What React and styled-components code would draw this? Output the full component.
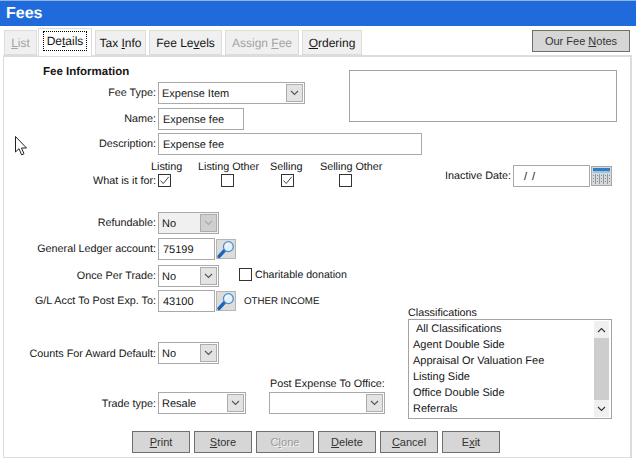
import styled, { createGlobalStyle } from 'styled-components';

const GlobalStyle = createGlobalStyle`
	html, body {
		margin: 0;
		padding: 0;
		background: #fff;
	}
	* {
		box-sizing: border-box;
	}
`;

const Page = styled.div`
	position: relative;
	width: 636px;
	height: 462px;
	overflow: hidden;
	font-family: 'Liberation Sans', Arial, sans-serif;
	font-size: 10.8px;
	color: #151515;
	text-rendering: geometricPrecision;
`;

const TitleBar = styled.div`
	height: 26px;
	padding-left: 6px;
	background: #1f6bdc;
	border-top: 1px solid #8fb4ee;
	color: #fff;
	font-size: 16px;
	font-weight: bold;
	line-height: 25px;
`;

const TabBar = styled.div`
	display: flex;
	align-items: flex-end;
	height: 29px;
	padding: 0 6px 0 4px;
`;

const Tab = styled.div`
	position: relative;
	display: flex;
	align-items: center;
	justify-content: center;
	width: ${(p) => p.$w}px;
	height: ${(p) => (p.$active ? 28 : 25)}px;
	margin-right: ${(p) => p.$gap ?? 3}px;
	margin-bottom: ${(p) => (p.$active ? -1 : 0)}px;
	padding-bottom: ${(p) => (p.$active ? 3 : 0)}px;
	background: ${(p) => (p.$active ? '#fff' : '#f0f0f0')};
	border: 1px solid #dcdcdc;
	border-bottom: ${(p) => (p.$active ? 'none' : '1px solid #dcdcdc')};
	color: ${(p) => (p.$disabled ? '#a3a3a3' : '#151515')};
	font-size: 12px;
	z-index: ${(p) => (p.$active ? 1 : 0)};
`;

const FocusBox = styled.span`
	padding: 2px 3px;
	border: 1px dotted #000;
`;

const NotesButton = styled.button`
	width: 98px;
	height: 22px;
	margin: 0 0 3px auto;
	padding: 0;
	background: #d6d6d6;
	border: 1px solid #6f6f6f;
	color: #333;
	font: inherit;
	font-size: 11px;
`;

const Panel = styled.div`
	width: 629px;
	height: 403px;
	margin-left: 3px;
	border: 1px solid #dcdcdc;
	border-right-width: 2px;
	border-top-width: 2px;
`;

const TopSection = styled.div`
	display: flex;
`;

const TopLeft = styled.div`
	flex: 0 0 345px;
	height: 73px;
`;

const Heading = styled.div`
	height: 14px;
	margin: 7px 0 4px 39px;
	font-size: 11.5px;
	font-weight: bold;
	line-height: 16px;
`;

const NotesBox = styled.div`
	width: 268px;
	height: 52px;
	margin-top: 13px;
	border: 1px solid #a3a3a3;
`;

const Row = styled.div`
	display: flex;
	align-items: center;
	margin-top: ${(p) => p.$top ?? 0}px;
`;

const Label = styled.div`
	flex: 0 0 153px;
	margin-right: 1px;
	padding-right: 1px;
	padding-top: ${(p) => (p.$low ? 2 : 0)}px;
	text-align: right;
	white-space: nowrap;
`;

const TextBox = styled.div`
	width: ${(p) => p.$w}px;
	height: 22px;
	padding-left: 4px;
	background: #fff;
	border: 1px solid #a9a9a9;
	font-size: 11px;
	line-height: 22px;
`;

const SelectBox = styled.div`
	display: flex;
	align-items: center;
	justify-content: space-between;
	width: ${(p) => p.$w}px;
	height: 22px;
	padding: 0 1px 0 3px;
	background: ${(p) => (p.$disabled ? '#f0f0f0' : '#fff')};
	border: 1px solid #a9a9a9;
	font-size: 11px;
`;

const SelectValue = styled.span`
	padding-top: 2px;
`;

const SelectArrow = styled.div`
	display: flex;
	align-items: center;
	justify-content: center;
	width: 17px;
	height: 18px;
	background: ${(p) => (p.$disabled ? '#cfcfcf' : '#e3e3e3')};
	border: 1px solid #adadad;
`;

const SearchButton = styled.div`
	display: flex;
	align-items: center;
	justify-content: center;
	width: 20px;
	height: 20px;
	margin-left: 1px;
	background: #dcdcdc;
	border: 1px solid #b5b5b5;
`;

const Check = styled.div`
	display: flex;
	align-items: center;
	justify-content: center;
	flex: none;
	width: 13px;
	height: 13px;
	margin-left: ${(p) => p.$left ?? 0}px;
	background: #fff;
	border: 1px solid #333;
`;

const PurposeRow = styled.div`
	display: flex;
	align-items: flex-end;
	margin-top: 5px;
`;

const PurposeGroup = styled.div`
	flex: 0 0 409px;
`;

const CheckHeads = styled.div`
	display: flex;
	height: 12px;
	margin-bottom: 2px;
	padding-left: 147px;
	line-height: 14px;
`;

const CheckHead = styled.span`
	flex: 0 0 ${(p) => p.$w}px;
	white-space: nowrap;
`;

const DateGroup = styled.div`
	display: flex;
	align-items: center;
	justify-content: flex-end;
	flex: 1;
	padding-right: 18px;
`;

const DateLabel = styled.div`
	margin-right: 2px;
	white-space: nowrap;
`;

const DateValue = styled(TextBox)`
	padding-left: 10px;
	word-spacing: 2px;
`;

const CalendarButton = styled.div`
	display: flex;
	width: 21px;
	height: 20px;
	margin-left: 1px;
`;

const LowerSection = styled.div`
	display: flex;
`;

const LowerLeft = styled.div`
	flex: 0 0 404px;
	padding-top: 25px;
`;

const CheckLabel = styled.span`
	margin-left: 3px;
	padding-bottom: 3px;
	font-size: 10.6px;
	white-space: nowrap;
`;

const Check20 = styled(Check)`
	margin: 0 0 3px 20px;
`;

const AccountName = styled.span`
	margin-left: 8px;
	font-size: 9.7px;
`;

const TradeRow = styled.div`
	display: flex;
	align-items: flex-end;
	margin-top: 14px;
`;

const TradeField = styled.div`
	display: flex;
	align-items: center;
`;

const OfficeField = styled.div`
	display: flex;
	flex-direction: column;
	margin-left: 23px;
`;

const OfficeLabel = styled.div`
	height: 12px;
	margin: 0 0 2px 1px;
	line-height: 12px;
	white-space: nowrap;
`;

const LowerRight = styled.div`
	display: flex;
	flex-direction: column;
	padding-top: 119px;
`;

const ListTitle = styled.div`
	height: 13px;
	line-height: 14px;
`;

const ListBox = styled.div`
	display: flex;
	justify-content: space-between;
	width: 204px;
	height: 100px;
	padding: 0 2px 1px 4px;
	border: 1px solid #a3a3a3;
`;

const ListItems = styled.div`
	display: flex;
	flex-direction: column;
`;

const ListItem = styled.div`
	height: 16px;
	padding-left: ${(p) => p.$indent ?? 0}px;
	font-size: 11px;
	line-height: 18px;
	white-space: nowrap;
`;

const ScrollTrack = styled.div`
	display: flex;
	flex-direction: column;
	align-items: center;
	justify-content: space-between;
	width: 15px;
	margin-top: 1px;
	background: #f0f0f0;
`;

const ScrollEnd = styled.div`
	display: flex;
	align-items: center;
	justify-content: center;
	height: 17px;
`;

const ScrollThumb = styled.div`
	width: 100%;
	flex: 1;
	background: #cdcdcd;
`;

const ButtonRow = styled.div`
	display: flex;
	gap: 4px;
	margin-top: 12px;
	padding-left: 128px;
`;

const ActionButton = styled.button`
	width: 58px;
	height: 22px;
	padding: 0 0 1px;
	background: #d6d6d6;
	border: 1px solid #6f6f6f;
	color: ${(p) => (p.disabled ? '#9a9a9a' : '#333')};
	font: inherit;
	font-size: 11px;
	text-shadow: ${(p) => (p.disabled ? '1px 1px 0 #f4f4f4' : 'none')};
`;

const CursorMark = styled.svg`
	position: absolute;
	left: 15px;
	top: 136px;
`;

const Chevron = ({ color = '#555', up }) => (
	<svg width="9" height="6" viewBox="0 0 9 6">
		<path d={up ? 'M1 5 L4.5 1.5 L8 5' : 'M1 1 L4.5 4.5 L8 1'} fill="none" stroke={color} strokeWidth="1.1" />
	</svg>
);

const Select = ({ w, value, disabled }) => (
	<SelectBox $w={w} $disabled={disabled}>
		<SelectValue>{value}</SelectValue>
		<SelectArrow $disabled={disabled}>
			<Chevron color={disabled ? '#a8a8a8' : '#555'} />
		</SelectArrow>
	</SelectBox>
);

const Tick = () => (
	<svg width="11" height="11" viewBox="0 0 11 11">
		<path d="M1.5 5.5 L4.2 8.5 L9.8 1.8" fill="none" stroke="#444" strokeWidth="1" />
	</svg>
);

const Magnifier = () => (
	<svg width="19" height="19" viewBox="0 0 19 19">
		<path d="M2.2 16.8 L7.5 11" stroke="#1c64b8" strokeWidth="3.6" strokeLinecap="round" />
		<circle cx="12" cy="6.5" r="5.2" fill="#e4f0fa" stroke="#4a8fcc" strokeWidth="1.3" />
		<path d="M9 6.2 A3.2 3.2 0 0 1 12 3.4" fill="none" stroke="#fff" strokeWidth="1.2" />
	</svg>
);

const Calendar = () => (
	<svg width="21" height="20" viewBox="0 0 21 20">
		<rect x="0.5" y="0.5" width="20" height="19" fill="#d8d8d8" stroke="#a8a8a8" />
		<rect x="2" y="2" width="17" height="3" fill="#2f7fc4" />
		<rect x="2" y="5" width="17" height="2" fill="#9cc3e2" />
		<path d="M2 9.5 H19 M2 12.5 H19 M2 15.5 H19" stroke="#7f8a94" strokeWidth="1" strokeDasharray="1 1" />
		<path d="M4.5 8 V18 M8.5 8 V18 M12.5 8 V18 M16.5 8 V18" stroke="#8f99a2" strokeWidth="1" />
	</svg>
);

const classifications = [
	'Agent Double Side',
	'Appraisal Or Valuation Fee',
	'Listing Side',
	'Office Double Side',
	'Referrals',
];

export default function App() {
	return (
		<Page>
			<GlobalStyle />
			<TitleBar>Fees</TitleBar>
			<TabBar>
				<Tab $w={33} $gap={1} $disabled><span><u>L</u>ist</span></Tab>
				<Tab $w={54} $active><FocusBox>De<u>t</u>ails</FocusBox></Tab>
				<Tab $w={51}><span>Tax <u>I</u>nfo</span></Tab>
				<Tab $w={73}><span>Fee Le<u>v</u>els</span></Tab>
				<Tab $w={74} $disabled><span>Assign <u>F</u>ee</span></Tab>
				<Tab $w={60}><span><u>O</u>rdering</span></Tab>
				<NotesButton>Our Fee <u>N</u>otes</NotesButton>
			</TabBar>
			<Panel>
				<TopSection>
					<TopLeft>
						<Heading>Fee Information</Heading>
						<Row>
							<Label>Fee Type:</Label>
							<Select w={147} value="Expense Item" />
						</Row>
						<Row $top={4}>
							<Label>Name:</Label>
							<TextBox $w={86}>Expense fee</TextBox>
						</Row>
					</TopLeft>
					<NotesBox />
				</TopSection>
				<Row $top={3}>
					<Label>Description:</Label>
					<TextBox $w={264}>Expense fee</TextBox>
				</Row>
				<PurposeRow>
					<PurposeGroup>
						<CheckHeads>
							<CheckHead $w={47}>Listing</CheckHead>
							<CheckHead $w={72}>Listing Other</CheckHead>
							<CheckHead $w={50}>Selling</CheckHead>
							<CheckHead $w={62}>Selling Other</CheckHead>
						</CheckHeads>
						<Row>
							<Label>What is it for:</Label>
							<Check><Tick /></Check>
							<Check $left={50} />
							<Check $left={47}><Tick /></Check>
							<Check $left={45} />
						</Row>
					</PurposeGroup>
					<DateGroup>
						<DateLabel>Inactive Date:</DateLabel>
						<DateValue $w={77}>/ /</DateValue>
						<CalendarButton><Calendar /></CalendarButton>
					</DateGroup>
				</PurposeRow>
				<LowerSection>
					<LowerLeft>
						<Row>
							<Label>Refundable:</Label>
							<Select w={61} value="No" disabled />
						</Row>
						<Row $top={4}>
							<Label>General Ledger account:</Label>
							<TextBox $w={57}>75199</TextBox>
							<SearchButton><Magnifier /></SearchButton>
						</Row>
						<Row $top={5}>
							<Label>Once Per Trade:</Label>
							<Select w={61} value="No" />
							<Check20 />
							<CheckLabel>Charitable donation</CheckLabel>
						</Row>
						<Row $top={3}>
							<Label>G/L Acct To Post Exp. To:</Label>
							<TextBox $w={57}>43100</TextBox>
							<SearchButton><Magnifier /></SearchButton>
							<AccountName>OTHER INCOME</AccountName>
						</Row>
						<Row $top={30}>
							<Label $low>Counts For Award Default:</Label>
							<Select w={61} value="No" />
						</Row>
						<TradeRow>
							<TradeField>
								<Label $low>Trade type:</Label>
								<Select w={88} value="Resale" />
							</TradeField>
							<OfficeField>
								<OfficeLabel>Post Expense To Office:</OfficeLabel>
								<Select w={116} value="" />
							</OfficeField>
						</TradeRow>
					</LowerLeft>
					<LowerRight>
						<ListTitle>Classifications</ListTitle>
						<ListBox>
							<ListItems>
								<ListItem $indent={3}>All Classifications</ListItem>
								{classifications.map((name) => (
									<ListItem key={name}>{name}</ListItem>
								))}
							</ListItems>
							<ScrollTrack>
								<ScrollEnd><Chevron color="#333" up /></ScrollEnd>
								<ScrollThumb />
								<ScrollEnd><Chevron color="#333" /></ScrollEnd>
							</ScrollTrack>
						</ListBox>
					</LowerRight>
				</LowerSection>
				<ButtonRow>
					<ActionButton><u>P</u>rint</ActionButton>
					<ActionButton><u>S</u>tore</ActionButton>
					<ActionButton disabled>C<u>l</u>one</ActionButton>
					<ActionButton><u>D</u>elete</ActionButton>
					<ActionButton><u>C</u>ancel</ActionButton>
					<ActionButton>E<u>x</u>it</ActionButton>
				</ButtonRow>
			</Panel>
			<CursorMark width="13" height="20" viewBox="0 0 13 20">
				<path d="M0.5 0.5 V16 L4 12.7 L6.6 18.8 L9 17.8 L6.5 12 H11.5 Z" fill="#fff" stroke="#222" strokeWidth="1" />
			</CursorMark>
		</Page>
	);
}
